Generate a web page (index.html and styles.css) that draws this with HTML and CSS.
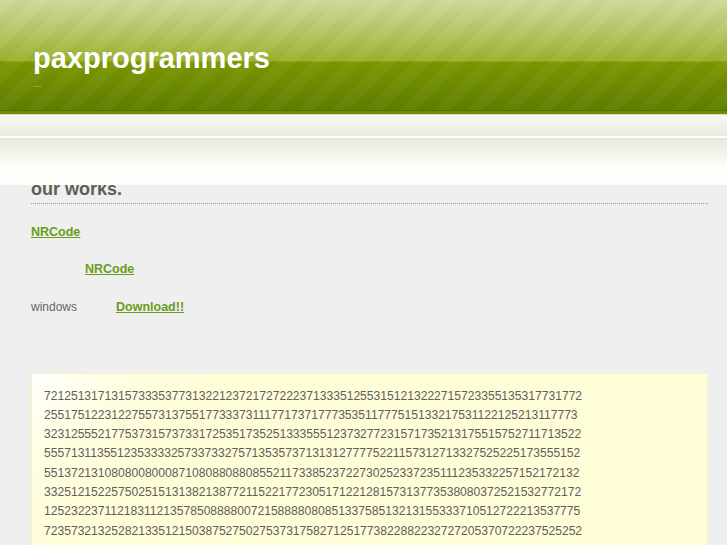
FILE: index.html
```html
<!DOCTYPE html>
<html lang="en">
<head>
    <meta charset="UTF-8">
    <title>paxprogrammers</title>
    <link rel="stylesheet" href="styles.css">
</head>
<body>
    <div class="header">
        <h1 class="site-title">paxprogrammers</h1>
        <p class="tagline">...</p>
    </div>
    <div class="navbar">
        <div class="nav-top"></div>
        <div class="nav-bottom"></div>
    </div>

    <div class="content">
        <h2 class="section-title">our works.</h2>

        <p class="row"><a href="#">NRCode</a></p>
        <p class="row indent"><a href="#">NRCode</a></p>
        <p class="row"><span class="platform">windows</span><a href="#">Download!!</a></p>

        <div class="code-box">
            <p>72125131713157333537731322123721727222371333512553151213222715723355135317731772</p>
            <p>25517512231227557313755177333731117717371777353511777515133217531122125213117773</p>
            <p>32312555217753731573733172535173525133355512373277231571735213175515752711713522</p>
            <p>55571311355123533332573373327571353573713131277775221157312713327525225173555152</p>
            <p>55137213108080080008710808808808552117338523722730252337235111235332257152172132</p>
            <p>33251215225750251513138213877211522177230517122128157313773538080372521532772172</p>
            <p>12523223711218311213578508888007215888808085133758513213155333710512722213537775</p>
            <p>72357321325282133512150387527502753731758271251773822882232727205370722237525252</p>
        </div>
    </div>
</body>
</html>
```

FILE: styles.css
```css
body {
    margin: 0;
    font-family: "Liberation Sans", Arial, sans-serif;
    background-color: #efefef;
    color: #666;
}
.header {
    position: relative;
    z-index: 1;
    height: 111px;
    padding: 0 33px;
    box-sizing: border-box;
    background:
        repeating-linear-gradient(135deg, rgba(255,255,255,0.03) 0 12px, rgba(0,0,0,0.015) 12px 24px),
        linear-gradient(to bottom, #cfd99a 0, #b3c45f 35px, #9ab12e 61px, #7d9700 62px, #6b8900 90px, #5c7e00 111px);
    border-bottom: 1px solid #4f7000;
}
.site-title {
    margin: 0;
    padding-top: 41px;
    font-size: 29px;
    line-height: 34px;
    font-weight: bold;
    color: #fff;
}
.tagline {
    margin: 4px 0 0;
    font-size: 10px;
    line-height: 10px;
    color: #c6d49a;
}
.navbar {
    position: relative;
    z-index: 1;
    background-color: #fdfdfa;
    height: 71px;
    border-top: 3px solid #6d8f00;
}
.nav-top {
    height: 21px;
    border-top: 1px solid #d8d9cb;
    background: linear-gradient(to bottom, #f7f8f3, #eaecdf);
    border-bottom: 2px solid #fff;
}
.nav-bottom {
    height: 25px;
    border-top: 1px solid #e2e4d5;
    background: linear-gradient(to bottom, #e9ebdd, #f9faf4);
}
.content {
    margin-top: -7px;
    padding: 0 19px 20px 31px;
}
.section-title {
    margin: 0;
    padding-bottom: 3px;
    font-size: 18px;
    line-height: 22px;
    font-weight: bold;
    color: #5d6055;
    border-bottom: 1px dotted #999;
}
.row {
    margin: 0;
    height: 37.5px;
    display: flex;
    align-items: center;
    font-size: 12px;
}
.row:first-of-type {
    margin-top: 9px;
}
.row a {
    font-size: 12.5px;
    font-weight: bold;
    color: #6a9c1c;
    text-decoration: underline;
}
.indent {
    padding-left: 54px;
}
.platform {
    width: 85px;
    color: #666;
}
.code-box {
    margin-top: 47px;
    padding: 13px 12px 11px;
    border: 1px dotted #f0eaa8;
    background: linear-gradient(135deg, #ffffff 0, #fffde3 60px, #fffdd7 140px);
}
.code-box p {
    margin: 0;
    font-size: 12.1px;
    line-height: 19.3px;
    color: #5e5e5e;
}
```
